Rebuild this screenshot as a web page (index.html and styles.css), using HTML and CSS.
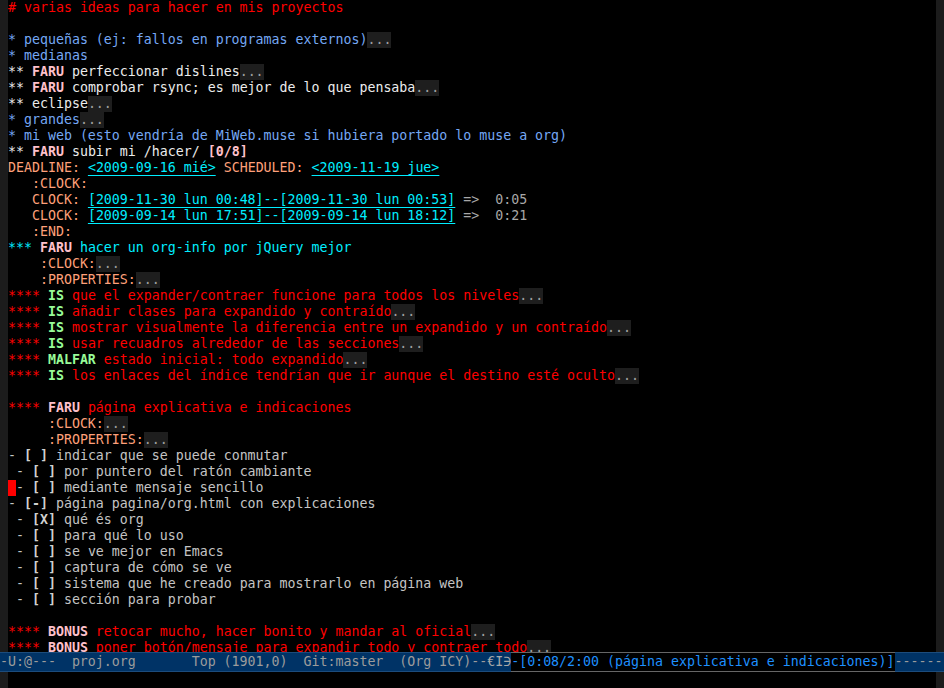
FILE: index.html
```html
<!DOCTYPE html>
<html lang="es">
<head>
<meta charset="utf-8">
<title>proj.org</title>
<link rel="stylesheet" href="styles.css">
</head>
<body>
<div class="frame">
  <div class="window">
    <div class="fringe"></div>
    <div class="buffer">
      <div class="ln"><span class="red"># varias ideas para hacer en mis proyectos</span></div>
      <div class="ln"></div>
      <div class="ln"><span class="l1">* pequeñas (ej: fallos en programas externos)</span><span class="ell">...</span></div>
      <div class="ln"><span class="l1">* medianas</span></div>
      <div class="ln"><span class="l2">** </span><span class="kw-faru">FARU</span><span class="l2"> perfeccionar dislines</span><span class="ell">...</span></div>
      <div class="ln"><span class="l2">** </span><span class="kw-faru">FARU</span><span class="l2"> comprobar rsync; es mejor de lo que pensaba</span><span class="ell">...</span></div>
      <div class="ln"><span class="l2">** eclipse</span><span class="ell">...</span></div>
      <div class="ln"><span class="l1">* grandes</span><span class="ell">...</span></div>
      <div class="ln"><span class="l1">* mi web (esto vendría de MiWeb.muse si hubiera portado lo muse a org)</span></div>
      <div class="ln"><span class="l2">** </span><span class="kw-faru">FARU</span><span class="l2"> subir mi /hacer/ </span><span class="cookie">[0/8]</span></div>
      <div class="ln"><span class="meta">DEADLINE:</span> <span class="date">&lt;2009-09-16 mié&gt;</span> <span class="meta">SCHEDULED:</span> <span class="date">&lt;2009-11-19 jue&gt;</span></div>
      <div class="ln"><span class="meta">   :CLOCK:</span></div>
      <div class="ln"><span class="meta">   CLOCK:</span> <span class="date">[2009-11-30 lun 00:48]--[2009-11-30 lun 00:53]</span><span class="dim"> =&gt;  0:05</span></div>
      <div class="ln"><span class="meta">   CLOCK:</span> <span class="date">[2009-09-14 lun 17:51]--[2009-09-14 lun 18:12]</span><span class="dim"> =&gt;  0:21</span></div>
      <div class="ln"><span class="meta">   :END:</span></div>
      <div class="ln"><span class="l3">*** </span><span class="kw-faru">FARU</span><span class="l3"> hacer un org-info por jQuery mejor</span></div>
      <div class="ln"><span class="meta">    :CLOCK:</span><span class="ell">...</span></div>
      <div class="ln"><span class="meta">    :PROPERTIES:</span><span class="ell">...</span></div>
      <div class="ln"><span class="red">**** </span><span class="kw-is">IS</span><span class="red"> que el expander/contraer funcione para todos los niveles</span><span class="ell">...</span></div>
      <div class="ln"><span class="red">**** </span><span class="kw-is">IS</span><span class="red"> añadir clases para expandido y contraído</span><span class="ell">...</span></div>
      <div class="ln"><span class="red">**** </span><span class="kw-is">IS</span><span class="red"> mostrar visualmente la diferencia entre un expandido y un contraído</span><span class="ell">...</span></div>
      <div class="ln"><span class="red">**** </span><span class="kw-is">IS</span><span class="red"> usar recuadros alrededor de las secciones</span><span class="ell">...</span></div>
      <div class="ln"><span class="red">**** </span><span class="kw-is">MALFAR</span><span class="red"> estado inicial: todo expandido</span><span class="ell">...</span></div>
      <div class="ln"><span class="red">**** </span><span class="kw-is">IS</span><span class="red"> los enlaces del índice tendrían que ir aunque el destino esté oculto</span><span class="ell">...</span></div>
      <div class="ln"></div>
      <div class="ln"><span class="red">**** </span><span class="kw-faru">FARU</span><span class="red"> página explicativa e indicaciones</span></div>
      <div class="ln"><span class="meta">     :CLOCK:</span><span class="ell">...</span></div>
      <div class="ln"><span class="meta">     :PROPERTIES:</span><span class="ell">...</span></div>
      <div class="ln body">- <b class="box">[ ]</b> indicar que se puede conmutar</div>
      <div class="ln body"> - <b class="box">[ ]</b> por puntero del ratón cambiante</div>
      <div class="ln body"><span class="cursor"> </span>- <b class="box">[ ]</b> mediante mensaje sencillo</div>
      <div class="ln body">- <b class="box">[-]</b> página pagina/org.html con explicaciones</div>
      <div class="ln body"> - <b class="box">[X]</b> qué és org</div>
      <div class="ln body"> - <b class="box">[ ]</b> para qué lo uso</div>
      <div class="ln body"> - <b class="box">[ ]</b> se ve mejor en Emacs</div>
      <div class="ln body"> - <b class="box">[ ]</b> captura de cómo se ve</div>
      <div class="ln body"> - <b class="box">[ ]</b> sistema que he creado para mostrarlo en página web</div>
      <div class="ln body"> - <b class="box">[ ]</b> sección para probar</div>
      <div class="ln"></div>
      <div class="ln"><span class="red">**** </span><span class="kw-faru">BONUS</span><span class="red"> retocar mucho, hacer bonito y mandar al oficial</span><span class="ell">...</span></div>
      <div class="ln"><span class="red">**** </span><span class="kw-faru">BONUS</span><span class="red"> poner botón/mensaje para expandir todo y contraer todo</span><span class="ell">...</span></div>
    </div>
    <div class="fringe"></div>
  </div>
  <div class="modeline"><span class="ml-text">-U:@---  proj.org       Top (1901,0)  Git:master  (Org ICY)--</span><span class="ml-icon">€I∋</span><span class="ml-clock">-[0:08/2:00 (página explicativa e indicaciones)]</span><span class="ml-tail">------</span></div>
  <div class="minibuffer">
    <div class="fringe"></div>
    <div class="echo"></div>
    <div class="fringe"></div>
  </div>
</div>
</body>
</html>
```

FILE: styles.css
```css
html, body {
  margin: 0;
  padding: 0;
  background: #000;
}

.frame {
  width: 944px;
  height: 688px;
  display: flex;
  flex-direction: column;
  font-family: "DejaVu Sans Mono", "Liberation Mono", monospace;
  font-size: 13.28px;
  color: #d8d8d8;
  overflow: hidden;
}

.window {
  height: 652px;
  display: flex;
  overflow: hidden;
}

.fringe {
  width: 8px;
  flex: none;
  background: #1c1c1c;
}

.buffer {
  flex: 1;
  background: #000;
  overflow: hidden;
}

.ln {
  height: 16px;
  line-height: 16px;
  white-space: pre;
}

.red { color: #ff0000; }
.l1 { color: #75a8f4; }
.l2 { color: #ececec; }
.l3 { color: #00eeff; }

.kw-faru {
  color: #ffc0cb;
  font-weight: bold;
}

.kw-is {
  color: #98fb98;
  font-weight: bold;
}

.cookie {
  color: #ffc0cb;
  font-weight: bold;
}

.meta { color: #ffa07a; }

.date {
  color: #00eeff;
  text-decoration: underline;
  text-underline-offset: 3px;
}

.dim { color: #a8a8a8; }

.ell {
  display: inline-block;
  height: 16px;
  vertical-align: top;
  background: #1e1e1e;
  color: #a0a0a0;
}

.body { color: #c4c4c4; }

.box {
  color: #d0d0d0;
  font-weight: bold;
}

.cursor {
  display: inline-block;
  width: 8px;
  height: 16px;
  vertical-align: top;
  background: #ff0000;
}

.modeline {
  height: 18px;
  line-height: 18px;
  flex: none;
  display: flex;
  white-space: pre;
  background: #003366;
  border-top: 1px solid #1c4c7c;
  border-bottom: 1px solid #1c4c7c;
  color: #9c9c9c;
}

.ml-icon {
  display: inline-block;
  width: 24px;
  overflow: hidden;
  color: #a8a8a8;
}

.ml-clock {
  background: #000;
  color: #1e90ff;
  box-shadow: 0 -1px 0 #666, 0 1px 0 #666;
}

.ml-tail {
  flex: 1;
  overflow: hidden;
}

.minibuffer {
  height: 16px;
  flex: none;
  display: flex;
}

.echo {
  flex: 1;
  background: #000;
}
```
